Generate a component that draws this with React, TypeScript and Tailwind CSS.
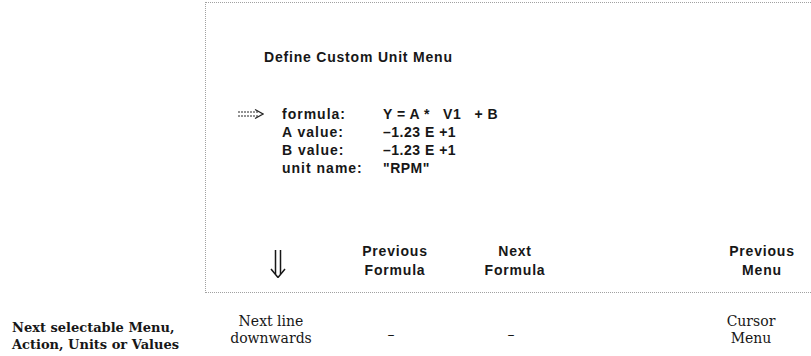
import React from "react";

const rows = [
  { label: "formula:", value: "Y = A *   V1   + B", active: true },
  { label: "A value:", value: "\u20131.23 E +1" },
  { label: "B value:", value: "\u20131.23 E +1" },
  { label: "unit name:", value: "\"RPM\"" },
];

function RightArrow() {
  return (
    <svg width="26" height="10" viewBox="0 0 26 10" className="text-neutral-800">
      <path d="M0 3h21M0 7h21" stroke="currentColor" strokeWidth="1" strokeDasharray="2 1" />
      <path d="M17 0.5L25 5L17 9.5" fill="none" stroke="currentColor" strokeWidth="1.2" />
    </svg>
  );
}

function DownArrow() {
  return (
    <svg width="18" height="28" viewBox="0 0 18 28" className="text-neutral-900">
      <path d="M6.5 0v24M11.5 0v24" stroke="currentColor" strokeWidth="1.5" />
      <path d="M2 19l7 8.5l7-8.5" fill="none" stroke="currentColor" strokeWidth="1.5" />
    </svg>
  );
}

export default function App() {
  return (
    <main className="relative h-[356px] w-[811px] overflow-hidden bg-white font-['Liberation_Sans',Arial,sans-serif] text-neutral-900">
      <div className="ml-[205px] mt-[2px] flex h-[291px] flex-col border-b border-l border-t border-dotted border-neutral-400">
        <h1 className="ml-[58px] mt-[46px] text-[14px] font-bold leading-[16px] tracking-[0.8px]">
          Define Custom Unit Menu
        </h1>

        <div className="mt-[40px] grid grid-cols-[32px_44px_101px_auto] text-[14px] font-bold leading-[18px] tracking-[0.5px]">
          {rows.map((r) => (
            <React.Fragment key={r.label}>
              <span />
              <span className="flex items-center">{r.active && <RightArrow />}</span>
              <span className="tracking-[1px]">{r.label}</span>
              <span className="whitespace-pre">{r.value}</span>
            </React.Fragment>
          ))}
        </div>

        <div className="mt-auto mb-[12px] ml-[14px] grid grid-cols-[120px_120px_120px_120px_120px] items-end text-center text-[14px] font-bold leading-[19px] tracking-[0.8px]">
          <div className="flex justify-center pb-[2px] pr-[4px]">
            <DownArrow />
          </div>
          <div className="pr-[10px]">
            Previous
            <br />
            Formula
          </div>
          <div className="pr-[10px]">
            Next
            <br />
            Formula
          </div>
          <div />
          <div className="pl-[4px]">
            Previous
            <br />
            Menu
          </div>
        </div>
      </div>

      <div className="mt-[20px] flex font-['DejaVu_Serif',serif] text-[14px] leading-[17px]">
        <div className="ml-[12px] mt-[6px] w-[210px] text-[13px] font-bold">
          Next selectable Menu,
          <br />
          Action, Units or Values
        </div>
        <div className="grid grid-cols-[120px_120px_120px_120px_120px] text-center">
          <div>
            Next line
            <br />
            downwards
          </div>
          <div className="pt-[13px]">&ndash;</div>
          <div className="pt-[13px]">&ndash;</div>
          <div />
          <div>
            Cursor
            <br />
            Menu
          </div>
        </div>
      </div>
    </main>
  );
}
